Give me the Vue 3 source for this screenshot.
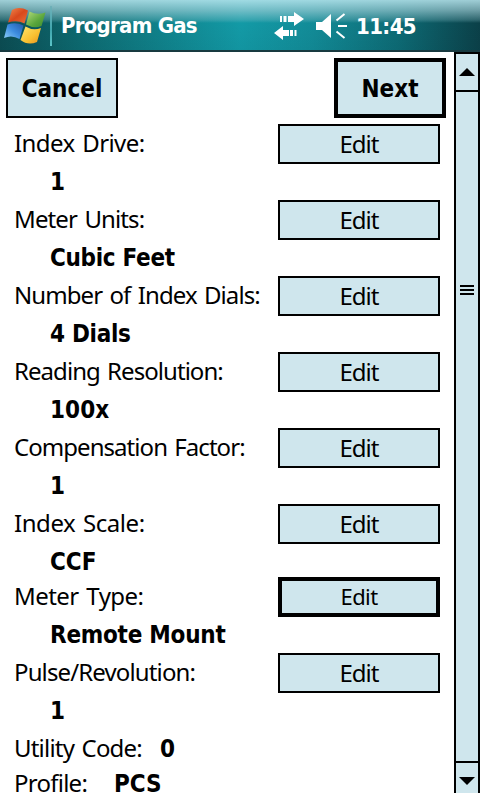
<script setup>
const fields = [
  { label: 'Index Drive:', value: '1', ls: -0.58, vs: 0 },
  { label: 'Meter Units:', value: 'Cubic Feet', ls: -0.88, vs: -0.3 },
  { label: 'Number of Index Dials:', value: '4 Dials', ls: -0.92, vs: -0.3 },
  { label: 'Reading Resolution:', value: '100x', ls: -0.95, vs: 0.1 },
  { label: 'Compensation Factor:', value: '1', ls: -0.95, vs: 0 },
  { label: 'Index Scale:', value: 'CCF', ls: -0.45, vs: 0, short: true },
  { label: 'Meter Type:', value: 'Remote Mount', ls: -0.55, vs: -0.25, focus: true },
  { label: 'Pulse/Revolution:', value: '1', ls: -0.87, vs: 0 }
]
</script>

<template>
  <div class="screen">
    <header class="bar">
      <svg class="flag" width="46" height="46" viewBox="0 0 46 46">
        <defs>
          <linearGradient id="r" x1="0" y1="0" x2="1" y2="1"><stop offset="0" stop-color="#f08a50" /><stop offset=".5" stop-color="#d8481c" /><stop offset="1" stop-color="#e8703a" /></linearGradient>
          <linearGradient id="g" x1="0" y1="0" x2="1" y2="1"><stop offset="0" stop-color="#b4dc7c" /><stop offset=".6" stop-color="#5aa63c" /><stop offset="1" stop-color="#3c8c34" /></linearGradient>
          <linearGradient id="b" x1="1" y1="0" x2="0" y2="1"><stop offset="0" stop-color="#2458a8" /><stop offset=".5" stop-color="#3d8de0" /><stop offset="1" stop-color="#8fd0f8" /></linearGradient>
          <linearGradient id="y" x1="0" y1="0" x2="1" y2="1"><stop offset="0" stop-color="#ffe66e" /><stop offset=".6" stop-color="#f8c030" /><stop offset="1" stop-color="#e89020" /></linearGradient>
        </defs>
        <path d="M12 10 Q19 6 28 10.500 L24.500 23.500 Q17 19.500 8 22.500Z" fill="url(#r)" />
        <path d="M29.500 11.500 Q37 15.500 45.500 12.500 L41.500 26 Q34 29 26 24.500Z" fill="url(#g)" />
        <path d="M7.500 24.500 Q16 21.500 23.500 25.500 L19.500 39 Q12 34.500 4 38Z" fill="url(#b)" />
        <path d="M25.500 26.500 Q33 31 41 28 L37 42 Q28 46 20.500 40Z" fill="url(#y)" />
      </svg>
      <i class="divider"></i>
      <h1>Program Gas</h1>
      <svg class="status" width="80" height="36" viewBox="0 0 80 36" fill="#fff">
        <path d="M7 9h2v6H7zM10.500 9h3v6h-3zM15 9h6V5l10 7-10 7v-4h-6z" />
        <path d="M1 26l9-7v4h6v6h-6v4zM17 23h3v6h-3zM21.500 23h2v6h-2z" />
        <path d="M43 15h6l9-8v24l-9-8h-6z" />
        <path d="M63.500 13.500l8-6.500M65 19h9M63.500 24.500l8 6.500" fill="none" stroke="#fff" stroke-width="2" />
      </svg>
      <span class="clock">11:45</span>
    </header>
    <div class="body">
      <main>
        <div class="actions">
          <button class="big">Cancel</button>
          <button class="big focus">Next</button>
        </div>
        <section v-for="f in fields" :key="f.label" class="field" :class="{ short: f.short }">
          <div class="text">
            <span class="label" :style="{ letterSpacing: f.ls + 'px' }">{{ f.label }}</span>
            <b class="value" :style="{ letterSpacing: f.vs + 'px' }">{{ f.value }}</b>
          </div>
          <button class="edit" :class="{ focus: f.focus }">Edit</button>
        </section>
        <div class="line util"><span class="label">Utility Code:</span><b>0</b></div>
        <div class="line prof"><span class="label">Profile:</span><b>PCS</b></div>
      </main>
      <aside class="scroll">
        <div class="cap up"><svg width="16" height="8"><path d="M0 8L8 0L16 8Z" /></svg></div>
        <div class="track"><i></i><i></i><i></i></div>
        <div class="cap down"><svg width="16" height="8"><path d="M0 0L8 8L16 0Z" /></svg></div>
      </aside>
    </div>
  </div>
</template>

<style>
body { background: #fff; overflow: hidden; }
</style>
<style scoped>
* { box-sizing: border-box; }
.screen { width: 480px; height: 793px; overflow: hidden; display: flex; flex-direction: column; font-family: "Noto Sans", sans-serif; color: #000; background: #fff; }
.bar { flex: none; height: 52px; display: flex; align-items: flex-start; border-bottom: 2px solid #183a40; color: #fff;
  background: linear-gradient(180deg, rgba(185,230,238,.85) 0, rgba(165,210,218,.65) 10px, rgba(140,195,203,.28) 20px, rgba(0,40,50,0) 23px, rgba(0,40,50,.05) 50px), linear-gradient(90deg, #0b4c52 0, #0d6a70 80px, #139aa6 240px, #128c98 310px, #0d6a74 400px, #0b4048 480px); }
.divider { width: 2px; height: 40px; margin: 6px 0 0 4px; background: linear-gradient(#6fb0b8, #3fa6ae 60%, #5cc4c8); }
h1, .clock, b, .big { font-family: "DejaVu Sans Condensed", "DejaVu Sans", sans-serif; font-stretch: condensed; font-weight: 700; }
h1 { margin: 11px 0 0 9px; font-size: 22px; line-height: 30px; width: 212px; white-space: nowrap; letter-spacing: -0.75px; }
.status { margin-top: 7px; }
.clock { margin: 12px 0 0 3px; font-size: 22px; line-height: 30px; letter-spacing: -0.6px; }
.body { flex: 1; min-height: 0; display: flex; }
main { width: 454px; overflow: hidden; }
button { display: flex; align-items: center; justify-content: center; padding: 0; margin: 0; background: #cfe6ed; border: 2px solid #000; border-radius: 0; color: #000; }
.actions { display: flex; justify-content: space-between; padding: 6px 8px 0 6px; height: 72px; }
.big { width: 112px; height: 60px; font-size: 24px; padding-top: 2px; }
.big.focus { border-width: 4px; }
.field { height: 76px; display: flex; justify-content: space-between; padding: 0 14px 0 13px; }
.field.short { height: 73px; }
.text { display: flex; flex-direction: column; white-space: nowrap; }
.label { font-size: 24px; line-height: 38px; padding-left: 1px; word-spacing: 2px; }
.value { font-size: 24px; line-height: 38px; padding: 1px 0 0 37px; }
.edit { width: 162px; height: 40px; flex: none; font: 24px "Noto Sans", sans-serif; letter-spacing: -1px; padding-bottom: 2px; }
.edit.focus { border-width: 4px; font-size: 22px; letter-spacing: -0.6px; }
.line { display: flex; padding-left: 13px; height: 38px; font-size: 24px; line-height: 38px; white-space: pre; }
.line b { padding-top: 1px; }
.util .label { letter-spacing: -0.8px; width: 147px; }
.prof { margin-top: -3px; }
.prof .label { letter-spacing: -0.75px; width: 101px; }
.scroll { width: 26px; display: flex; flex-direction: column; border: 2px solid #000; border-bottom: 0; background: #cfe6ed; }
.cap { height: 38px; flex: none; display: flex; justify-content: center; align-items: center; }
.up { border-bottom: 2px solid #000; }
.down { height: 32px; border-top: 2px solid #000; padding-top: 5px; }
.track { flex: 1; display: flex; flex-direction: column; align-items: center; gap: 2px; padding-top: 193px; }
.track i { width: 14px; height: 2px; background: #000; }
</style>
